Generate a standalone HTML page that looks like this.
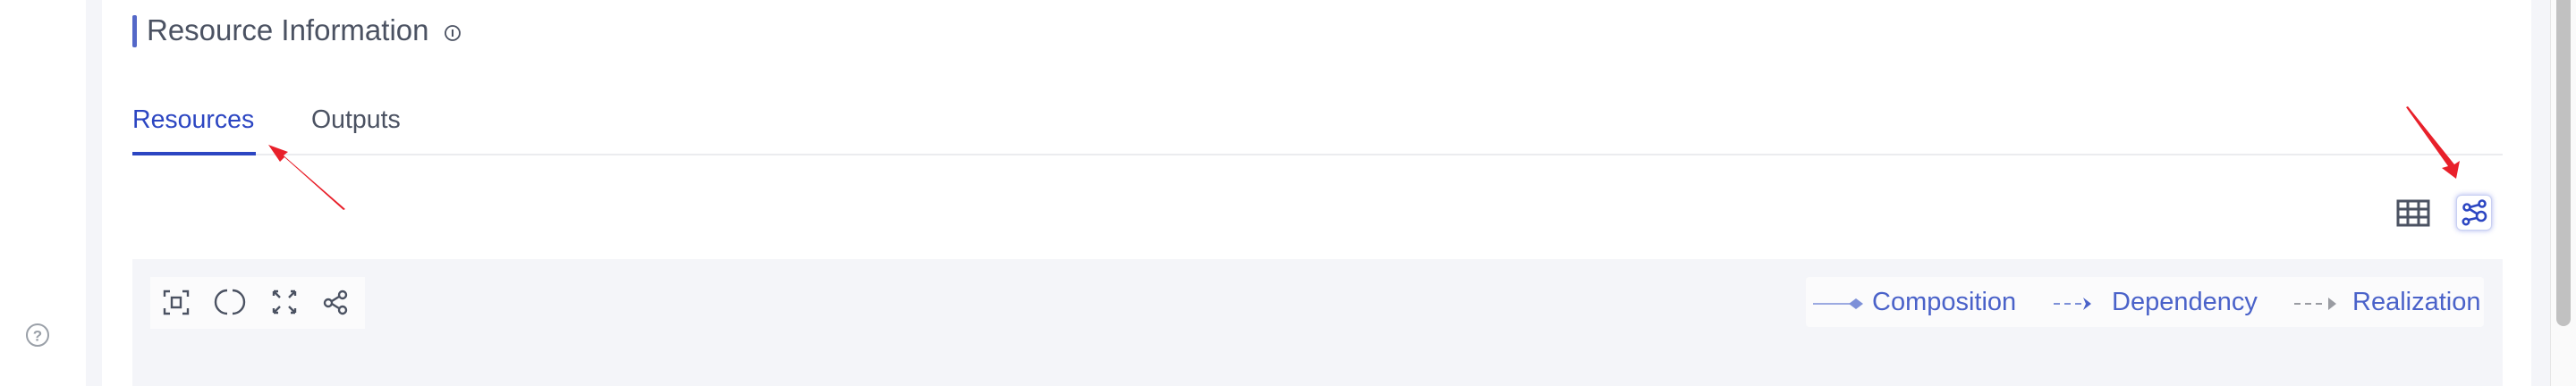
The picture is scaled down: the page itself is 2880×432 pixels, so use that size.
<!DOCTYPE html>
<html><head><style>
html,body{margin:0;padding:0;width:2880px;height:432px;overflow:hidden;background:#fff;font-family:"Liberation Sans",sans-serif}
.a{position:absolute}
</style></head><body>
<div class="a" style="left:96px;top:0;width:18px;height:432px;background:#f4f5f9"></div>
<div class="a" style="left:2830px;top:0;width:21px;height:432px;background:#f4f5f9"></div>
<div class="a" style="left:2851px;top:0;width:1px;height:432px;background:#e6e6e6"></div>
<div class="a" style="left:2852px;top:0;width:28px;height:432px;background:#fafafa"></div>
<div class="a" style="left:2858px;top:-10px;width:16px;height:375px;background:#c1c1c1;border-radius:8px"></div>

<svg class="a" style="left:28px;top:361px" width="28" height="28" viewBox="0 0 28 28"><circle cx="14" cy="14" r="12" fill="none" stroke="#9aa0a8" stroke-width="2"/><text x="14" y="20.5" font-size="17" font-weight="bold" text-anchor="middle" fill="#9aa0a8" font-family="Liberation Sans">?</text></svg>

<div class="a" style="left:148px;top:17px;width:5px;height:36px;background:#5468c8;border-radius:2px"></div>
<div class="a" style="left:164px;top:14px;font-size:33px;color:#4b5262;line-height:40px">Resource Information</div>
<svg class="a" style="left:496px;top:27px" width="20" height="20" viewBox="0 0 20 20"><circle cx="10" cy="10" r="8" fill="none" stroke="#4b5262" stroke-width="1.8"/><line x1="10" y1="6" x2="10" y2="14" stroke="#4b5262" stroke-width="2"/></svg>

<div class="a" style="left:148px;top:116px;font-size:28.5px;color:#2c46c2;line-height:36px">Resources</div>
<div class="a" style="left:348px;top:116px;font-size:28.5px;color:#4b5262;line-height:36px">Outputs</div>
<div class="a" style="left:148px;top:172px;width:2650px;height:2px;background:#ebecef"></div>
<div class="a" style="left:148px;top:170px;width:138px;height:4px;background:#2c46c2"></div>

<svg class="a" style="left:2676px;top:220px" width="44" height="36" viewBox="0 0 44 36"><rect x="5" y="5" width="34" height="27" fill="none" stroke="#4b5262" stroke-width="3"/><line x1="16" y1="5" x2="16" y2="32" stroke="#4b5262" stroke-width="3"/><line x1="28" y1="5" x2="28" y2="32" stroke="#4b5262" stroke-width="3"/><line x1="5" y1="14" x2="39" y2="14" stroke="#4b5262" stroke-width="3"/><line x1="5" y1="23" x2="39" y2="23" stroke="#4b5262" stroke-width="3"/></svg>
<div class="a" style="left:2746px;top:218px;width:38px;height:38px;border:1px solid #c9d0f2;border-radius:6px;background:#fff;box-shadow:0 0 6px rgba(70,90,220,.45)"></div>
<svg class="a" style="left:2746px;top:218px" width="40" height="40" viewBox="0 0 40 40"><g fill="none" stroke="#2c46c2" stroke-width="2.6"><circle cx="12" cy="14" r="3.5"/><circle cx="29" cy="10" r="3.5"/><circle cx="28" cy="24" r="5"/><circle cx="11" cy="30" r="3.2"/><path d="M15 16 L23 21 M15 14 L26 11 M14 28 L23 26"/></g></svg>

<svg class="a" style="left:0;top:0" width="2880" height="432"><g fill="#e8202a"><polygon points="386,234 384,235 318,176 313,181 300,162 322,170 317,174"/><polygon points="2690,120 2692,119 2744,184 2750,180 2746,200 2730,188 2737,186"/></g></svg>

<div class="a" style="left:148px;top:290px;width:2650px;height:142px;background:#f4f5f9"></div>
<div class="a" style="left:168px;top:310px;width:240px;height:58px;background:#fbfbfc"></div>
<svg class="a" style="left:168px;top:310px" width="240" height="58" viewBox="0 0 240 58"><g fill="none" stroke="#4b5262" stroke-width="2.4"><path d="M16 22 V16 H22 M36 16 H42 V22 M42 35 V41 H36 M22 41 H16 V35"/><rect x="24" y="23" width="10" height="11"/><path d="M86 15 A13 13 0 0 0 86 41 M92 15 A13 13 0 0 1 92 41"/><path d="M138 16 L145 23 M138 16 V21 M138 16 H143 M162 16 L155 23 M162 16 V21 M162 16 H157 M138 40 L145 33 M138 40 V35 M138 40 H143 M162 40 L155 33 M162 40 V35 M162 40 H157"/><circle cx="199" cy="29" r="4"/><circle cx="215" cy="20" r="4"/><circle cx="215" cy="37" r="4"/><path d="M203 30 L211 35 M203 27 L211 22"/></g></svg>

<div class="a" style="left:2019px;top:310px;width:758px;height:56px;background:#fbfbfc;border-radius:4px"></div>
<svg class="a" style="left:2019px;top:310px" width="758" height="56" viewBox="0 0 758 56"><line x1="8" y1="30" x2="50" y2="30" stroke="#7d90d8" stroke-width="1.5"/><polygon points="48,30 56,24 64,30 56,36" fill="#7d90d8"/><line x1="277" y1="30" x2="310" y2="30" stroke="#7d90d8" stroke-width="2" stroke-dasharray="7,5"/><path d="M310 23 L319 30 L310 37 L313 30 Z" fill="#4a62c9"/><line x1="546" y1="30" x2="582" y2="30" stroke="#9a9ca2" stroke-width="2" stroke-dasharray="7,5"/><path d="M584 23 L593 30 L584 37 Z" fill="#9a9ca2"/></svg>
<div class="a" style="left:2093px;top:320px;font-size:29px;line-height:36px;color:#4a62c9">Composition</div>
<div class="a" style="left:2361px;top:320px;font-size:29px;line-height:36px;color:#4a62c9">Dependency</div>
<div class="a" style="left:2630px;top:320px;font-size:29px;line-height:36px;color:#4a62c9">Realization</div>
</body></html>
